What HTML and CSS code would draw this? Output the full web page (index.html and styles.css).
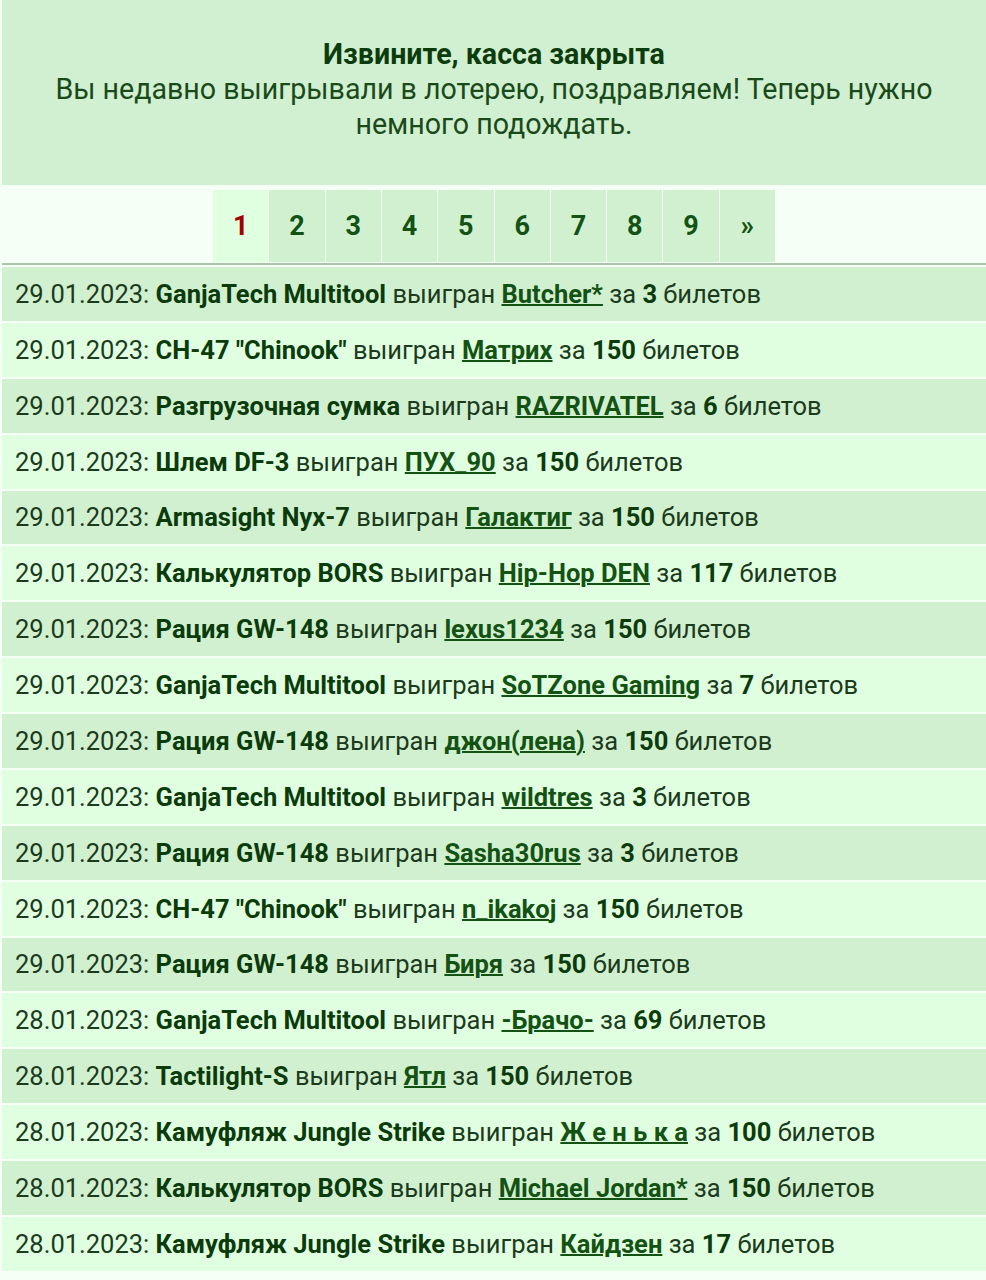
FILE: index.html
```html
<!DOCTYPE html>
<html lang="ru">
<head>
  <meta charset="UTF-8" />
  <meta name="viewport" content="width=device-width, initial-scale=1.0"/>
  <title>Лотерея</title>
  <link rel="stylesheet" href="styles.css">
</head>
<body>

<div class="page">
  <div class="notice">
    <div class="notice-title">Извините, касса закрыта</div>
    <div class="notice-text">Вы недавно выигрывали в лотерею, поздравляем! Теперь нужно немного подождать.</div>
  </div>

  <div class="pager">
    <span class="page-cell current">1</span>
    <a class="page-cell" href="#">2</a>
    <a class="page-cell" href="#">3</a>
    <a class="page-cell" href="#">4</a>
    <a class="page-cell" href="#">5</a>
    <a class="page-cell" href="#">6</a>
    <a class="page-cell" href="#">7</a>
    <a class="page-cell" href="#">8</a>
    <a class="page-cell" href="#">9</a>
    <a class="page-cell" href="#">&raquo;</a>
  </div>

  <div class="winners">
    <div class="win">29.01.2023: <b>GanjaTech Multitool</b> выигран <a href="#">Butcher*</a> за <b>3</b> билетов</div>
    <div class="win">29.01.2023: <b>CH-47 "Chinook"</b> выигран <a href="#">Матрих</a> за <b>150</b> билетов</div>
    <div class="win">29.01.2023: <b>Разгрузочная сумка</b> выигран <a href="#">RAZRIVATEL</a> за <b>6</b> билетов</div>
    <div class="win">29.01.2023: <b>Шлем DF-3</b> выигран <a href="#">ПУХ_90</a> за <b>150</b> билетов</div>
    <div class="win">29.01.2023: <b>Armasight Nyx-7</b> выигран <a href="#">Галактиг</a> за <b>150</b> билетов</div>
    <div class="win">29.01.2023: <b>Калькулятор BORS</b> выигран <a href="#">Hip-Hop DEN</a> за <b>117</b> билетов</div>
    <div class="win">29.01.2023: <b>Рация GW-148</b> выигран <a href="#">lexus1234</a> за <b>150</b> билетов</div>
    <div class="win">29.01.2023: <b>GanjaTech Multitool</b> выигран <a href="#">SoTZone Gaming</a> за <b>7</b> билетов</div>
    <div class="win">29.01.2023: <b>Рация GW-148</b> выигран <a href="#">джон(лена)</a> за <b>150</b> билетов</div>
    <div class="win">29.01.2023: <b>GanjaTech Multitool</b> выигран <a href="#">wildtres</a> за <b>3</b> билетов</div>
    <div class="win">29.01.2023: <b>Рация GW-148</b> выигран <a href="#">Sasha30rus</a> за <b>3</b> билетов</div>
    <div class="win">29.01.2023: <b>CH-47 "Chinook"</b> выигран <a href="#">n_ikakoj</a> за <b>150</b> билетов</div>
    <div class="win">29.01.2023: <b>Рация GW-148</b> выигран <a href="#">Биря</a> за <b>150</b> билетов</div>
    <div class="win">28.01.2023: <b>GanjaTech Multitool</b> выигран <a href="#">-Брачо-</a> за <b>69</b> билетов</div>
    <div class="win">28.01.2023: <b>Tactilight-S</b> выигран <a href="#">Ятл</a> за <b>150</b> билетов</div>
    <div class="win">28.01.2023: <b>Камуфляж Jungle Strike</b> выигран <a href="#">Ж е н ь к а</a> за <b>100</b> билетов</div>
    <div class="win">28.01.2023: <b>Калькулятор BORS</b> выигран <a href="#">Michael Jordan*</a> за <b>150</b> билетов</div>
    <div class="win">28.01.2023: <b>Камуфляж Jungle Strike</b> выигран <a href="#">Кайдзен</a> за <b>17</b> билетов</div>
  </div>
</div>

</body>
</html>
```

FILE: styles.css
```css
body {
  font-family: Roboto, "Noto Sans", sans-serif;
  background-color: #f5fff5;
  color: #1c3a1c;
  margin: 0;
}

.page {
  padding-left: 2px;
}

/* closed notice */
.notice {
  background-color: #d1efd1;
  text-align: center;
  font-size: 28.6px;
  line-height: 35px;
  padding: 37px 40px 43px;
  color: #1a4a1a;
}

.notice-title {
  font-weight: bold;
  color: #0c3c0c;
}

/* page numbers */
.pager {
  display: flex;
  justify-content: center;
  gap: 1px;
  padding: 4px 0 1px;
  margin-top: 1px;
  border-bottom: 2px solid #a9c4a9;
}

.page-cell {
  width: 55.3px;
  height: 72px;
  display: flex;
  align-items: center;
  justify-content: center;
  background-color: #d0f0d0;
  color: #145214;
  font-weight: bold;
  font-size: 27px;
  text-decoration: none;
}

.page-cell.current {
  background-color: #e0ffe0;
  color: #a00000;
}

/* winners list */
.winners {
  display: flex;
  flex-direction: column;
  gap: 2px;
  padding-top: 2px;
}

.win {
  height: 53.88px;
  display: flex;
  align-items: center;
  padding-left: 13px;
  font-size: 25.5px;
  white-space: pre;
  background-color: #d0f0d0;
}

.win:nth-child(even) {
  background-color: #e0ffe0;
}

.win b {
  color: #0b3a0b;
}

.win a {
  color: #145214;
  font-weight: bold;
  text-decoration-thickness: 2px;
}
```
